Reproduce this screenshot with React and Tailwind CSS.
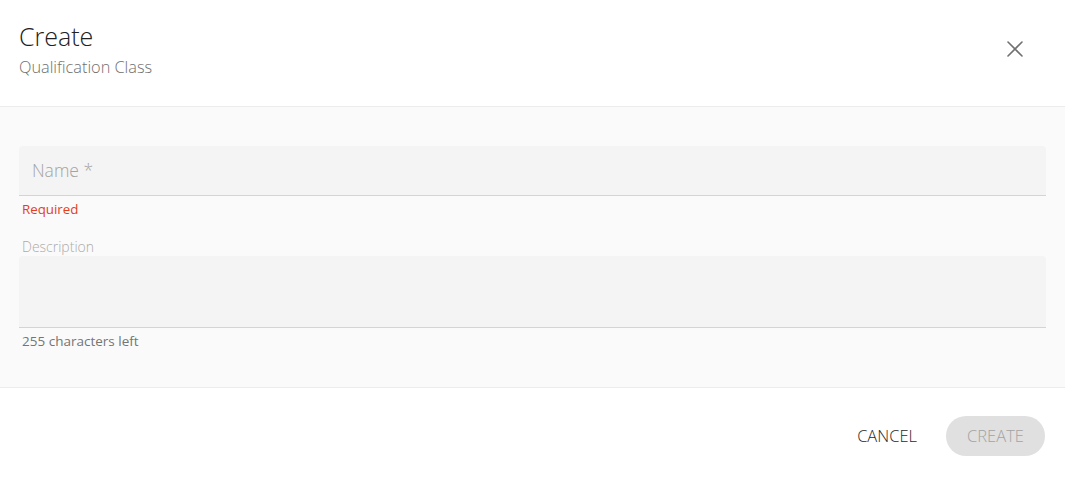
import React from 'react';

function CloseIcon() {
  return (
    <svg width="18" height="18" viewBox="0 0 18 18" fill="none">
      <path d="M2 2L16 16M16 2L2 16" stroke="#707070" strokeWidth="1.6" strokeLinecap="round" />
    </svg>
  );
}

export default function App() {
  return (
    <div className="w-[1065px] h-[477px] bg-white flex flex-col font-light" style={{ fontFamily: '"Open Sans", sans-serif' }}>
      <div className="h-[107px] flex items-start justify-between border-b border-[#ececec] pl-[19px] pr-[41px] pt-[20px]">
        <div className="flex flex-col">
          <h1 className="text-[25px] leading-[32px] text-[#212121]">Create</h1>
          <p className="text-[16.3px] leading-[22px] mt-[4px] text-[#707070]">Qualification Class</p>
        </div>
        <button className="mt-[20px]">
          <CloseIcon />
        </button>
      </div>

      <div className="h-[281px] bg-[#fafafa] border-b border-[#ececec] px-[19px] pt-[39px]">
        <div className="h-[50px] bg-[#f4f4f4] rounded-t-[4px] border-b border-[#d4d4d4] flex items-center px-[13px]">
          <span className="text-[17.5px] text-[#a3a3a3]">Name *</span>
        </div>
        <p className="text-[13.3px] leading-[20px] mt-[3px] ml-[3px] font-normal text-[#e2401c]">Required</p>
        <p className="text-[14px] leading-[18px] mt-[19px] ml-[3px] text-[#ababab]">Description</p>
        <div className="h-[72px] bg-[#f4f4f4] rounded-t-[4px] border-b border-[#d4d4d4]"></div>
        <p className="text-[13.5px] leading-[18px] mt-[4px] ml-[3px] font-normal text-[#757575]">255 characters left</p>
      </div>

      <div className="flex-1 flex items-start justify-end pr-[20px] pt-[28px] gap-[29px]">
        <button className="h-[40px] text-[16.5px] text-[#2a2a2a]">CANCEL</button>
        <button className="h-[40px] w-[99px] rounded-full bg-[#e0e0e0] text-[16.5px] text-[#a3a3a3]">CREATE</button>
      </div>
    </div>
  );
}
